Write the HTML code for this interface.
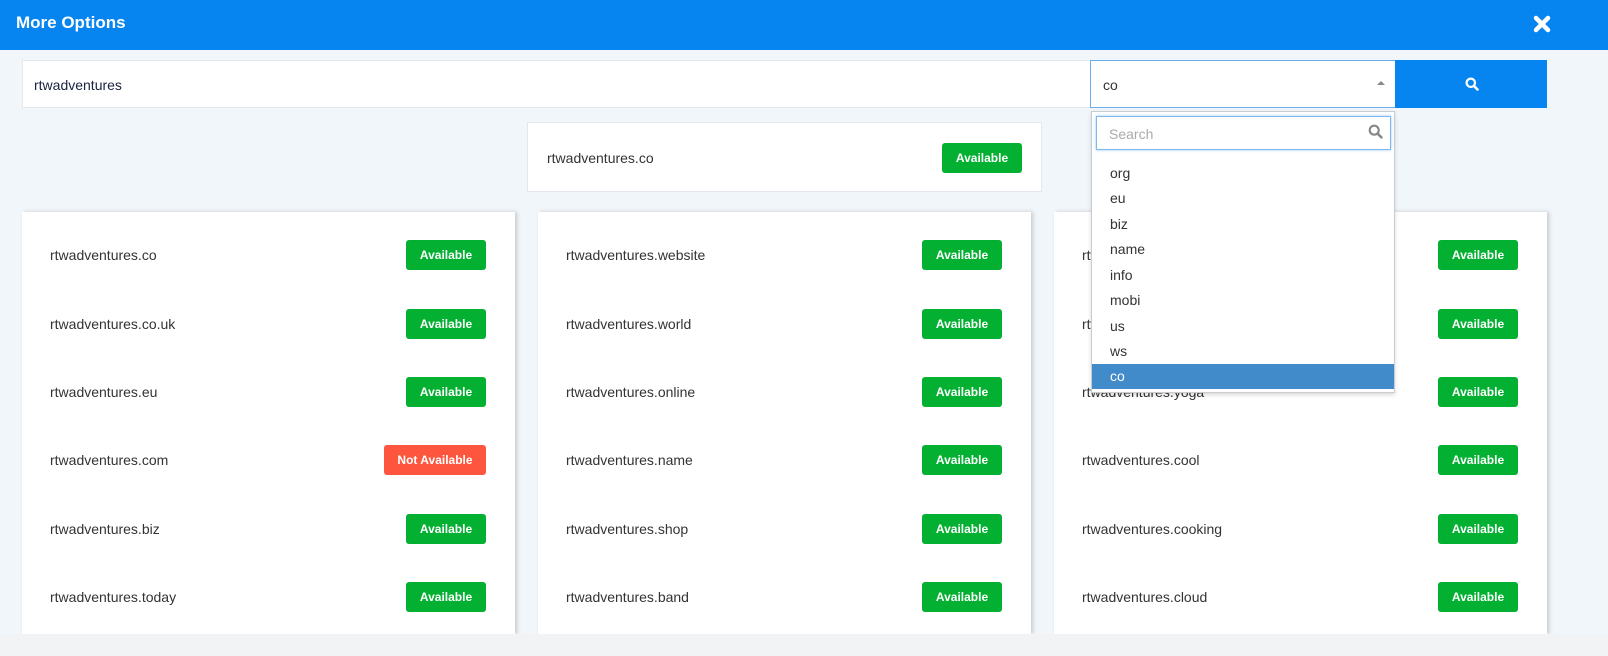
<!DOCTYPE html>
<html><head><style>
*{box-sizing:border-box;margin:0;padding:0}
body{width:1608px;height:656px;background:#f1f6fa;font-family:"Liberation Sans",sans-serif;position:relative;overflow:hidden}
.hdr{position:absolute;left:0;top:0;width:1608px;height:50px;background:#0685f0}
.hdr h1{position:absolute;left:16px;top:13px;color:#fff;font-size:17px;font-weight:bold}
.x{position:absolute;left:1533px;top:15px}
.inp{position:absolute;left:22px;top:60px;width:1069px;height:48px;background:#fff;border:1px solid #e2e8ee;font-size:14px;color:#1a2340;padding:16px 11px}
.sel{position:absolute;left:1090px;top:60px;width:306px;height:48px;background:#fff;border:1px solid #6aaef0;font-size:14px;color:#333;padding:16px 12px}
.sel:after{content:"";position:absolute;right:10px;top:20px;border:4px solid transparent;border-bottom:4px solid #888;border-top:0}
.btn{position:absolute;left:1395px;top:60px;width:152px;height:48px;background:#0685f0}
.res{position:absolute;left:527px;top:122px;width:515px;height:70px;background:#fff;border:1px solid #e2e8ee}
.card{position:absolute;top:212px;width:493px;height:422px;background:#fff;box-shadow:2px 0 4px rgba(0,0,0,.18)}
.row{position:absolute;left:28px;right:29px;height:30px;font-size:14px;color:#333;line-height:30px}
.b{position:absolute;right:0;top:0;height:30px;border-radius:3px;background:#03b031;color:#fff;font-size:12px;font-weight:bold;text-align:center;width:80px;line-height:30px}
.b.n{background:#fe563e;width:102px}
.dd{position:absolute;left:1091px;top:111px;width:304px;height:282px;background:#fff;border:1px solid #c8cdd2;box-shadow:0 2px 4px rgba(0,0,0,.15)}
.ds{position:absolute;left:4px;top:4px;width:295px;height:34px;border:1px solid #7fb8ee;box-shadow:0 0 3px #9cc8f3;font-size:14px;color:#aaa;padding:9px 12px}
.it{position:absolute;left:0;width:302px;height:25px;font-size:14px;color:#333;padding:4px 18px}
.it.s{background:#428bca;color:#fff}
.bot{position:absolute;left:0;top:634px;width:1608px;height:22px;background:#f1f3f5}
</style></head><body>
<div class="hdr"><h1>More Options</h1>
<svg class="x" width="18" height="18" viewBox="0 0 18 18"><path d="M3 3L15 15M15 3L3 15" stroke="#fff" stroke-width="4.5" stroke-linecap="round"/></svg></div>
<div class="inp">rtwadventures</div>
<div class="sel">co</div>
<div class="btn"><svg style="position:absolute;left:70px;top:17px" width="14" height="14" viewBox="0 0 14 14"><circle cx="5.8" cy="5.8" r="4.2" fill="none" stroke="#fff" stroke-width="2.2"/><path d="M9 9L12.5 12.5" stroke="#fff" stroke-width="2.6" stroke-linecap="round"/></svg></div>
<div class="res"><div class="row" style="left:19px;right:19px;top:20px">rtwadventures.co<div class="b">Available</div></div></div>
<div class="card" style="left:22px">
<div class="row" style="top:28px">rtwadventures.co<div class="b">Available</div></div>
<div class="row" style="top:97px">rtwadventures.co.uk<div class="b">Available</div></div>
<div class="row" style="top:165px">rtwadventures.eu<div class="b">Available</div></div>
<div class="row" style="top:233px">rtwadventures.com<div class="b n">Not Available</div></div>
<div class="row" style="top:302px">rtwadventures.biz<div class="b">Available</div></div>
<div class="row" style="top:370px">rtwadventures.today<div class="b">Available</div></div>
</div>
<div class="card" style="left:538px">
<div class="row" style="top:28px">rtwadventures.website<div class="b">Available</div></div>
<div class="row" style="top:97px">rtwadventures.world<div class="b">Available</div></div>
<div class="row" style="top:165px">rtwadventures.online<div class="b">Available</div></div>
<div class="row" style="top:233px">rtwadventures.name<div class="b">Available</div></div>
<div class="row" style="top:302px">rtwadventures.shop<div class="b">Available</div></div>
<div class="row" style="top:370px">rtwadventures.band<div class="b">Available</div></div>
</div>
<div class="card" style="left:1054px">
<div class="row" style="top:28px">rtwadventures.xyz<div class="b">Available</div></div>
<div class="row" style="top:97px">rtwadventures.site<div class="b">Available</div></div>
<div class="row" style="top:165px">rtwadventures.yoga<div class="b">Available</div></div>
<div class="row" style="top:233px">rtwadventures.cool<div class="b">Available</div></div>
<div class="row" style="top:302px">rtwadventures.cooking<div class="b">Available</div></div>
<div class="row" style="top:370px">rtwadventures.cloud<div class="b">Available</div></div>
</div>
<div class="bot"></div>
<div class="dd">
<div class="ds">Search<svg style="position:absolute;right:7px;top:7px" width="15" height="15" viewBox="0 0 14 14"><circle cx="5.8" cy="5.8" r="4.2" fill="none" stroke="#888" stroke-width="2"/><path d="M9 9L12.5 12.5" stroke="#888" stroke-width="2.4" stroke-linecap="round"/></svg></div>
<div class="it" style="top:49px">org</div>
<div class="it" style="top:74px">eu</div>
<div class="it" style="top:100px">biz</div>
<div class="it" style="top:125px">name</div>
<div class="it" style="top:151px">info</div>
<div class="it" style="top:176px">mobi</div>
<div class="it" style="top:202px">us</div>
<div class="it" style="top:227px">ws</div>
<div class="it s" style="top:252px">co</div>
</div>
</body></html>
